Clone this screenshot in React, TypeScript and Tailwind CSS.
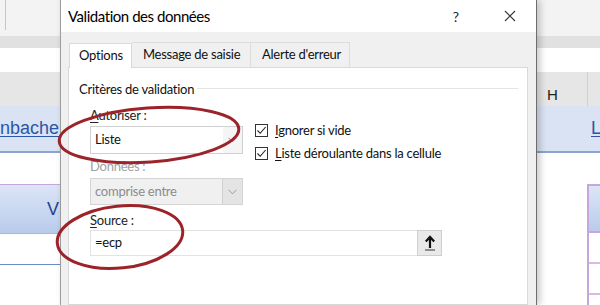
import React from "react";

const ui = "font-['Lato','Liberation_Sans',sans-serif]";

function Chevron({ color = "#606060" }: { color?: string }) {
    return (
        <svg width="9" height="6" viewBox="0 0 9 6">
            <path d="M0.5 0.8 L4.5 4.8 L8.5 0.8" fill="none" stroke={color} strokeWidth="1" />
        </svg>
    );
}

function Check({ hot, rest }: { hot: string; rest: string }) {
    return (
        <div className="flex items-center h-[23px]">
            <div className="w-[13px] h-[13px] border border-[#333] bg-white flex items-center justify-center">
                <svg width="11" height="11" viewBox="0 0 11 11">
                    <path d="M1.5 5.5 L4.2 8.3 L9.6 2" fill="none" stroke="#222" strokeWidth="1.1" />
                </svg>
            </div>
            <span className="ml-[7px] leading-none">
                <span className="underline underline-offset-2">{hot}</span>
                {rest}
            </span>
        </div>
    );
}

function LeftSheet() {
    return (
        <div className="w-[60px] shrink-0 flex flex-col font-['Liberation_Sans',sans-serif]">
            <div className="h-[36px] bg-[#f3f3f3] pl-[5px]">
                <div className="w-px h-[30px] bg-[#c6c6c6]" />
            </div>
            <div className="h-[12px] bg-[#e1e1e1]" />
            <div className="h-[24px] bg-white" />
            <div className="h-[34px] bg-[#e6e6e6]" />
            <div className="h-[47px] bg-[#dae3f3] border-b-2 border-[#8ba3cf] flex items-center justify-end overflow-hidden">
                <span className="text-[18px] text-[#2a56a8] underline underline-offset-2 mr-[1px] whitespace-nowrap">nbache</span>
            </div>
            <div className="h-[31px] bg-white" />
            <div className="h-[50px] border-y border-[#c6a6dc] bg-gradient-to-b from-[#dce5f6] to-[#b9cbeb] flex items-center justify-end">
                <span className="text-[18px] text-[#1e3f91] mr-px">V</span>
            </div>
            <div className="h-[31px] bg-white border-b border-[#6b8cc6]" />
            <div className="flex-1 bg-white" />
        </div>
    );
}

function RightSheet() {
    return (
        <div className="flex-1 flex flex-col font-['Liberation_Sans',sans-serif]">
            <div className="h-[36px] bg-[#f3f3f3]" />
            <div className="h-[12px] bg-[#e1e1e1]" />
            <div className="h-[24px] bg-white" />
            <div className="h-[34px] bg-[#e6e6e6] flex items-center">
                <span className="ml-[10px] w-[40px] text-[15px] text-[#222] pt-[12px]">H</span>
                <div className="w-px h-full bg-[#d0d0d0]" />
            </div>
            <div className="h-[47px] bg-[#dae3f3] border-b-2 border-[#8ba3cf] flex items-center pl-[54px]">
                <span className="text-[18px] text-[#2a56a8] underline underline-offset-2">L</span>
            </div>
            <div className="h-[31px] bg-white" />
            <div className="flex-1 bg-white pl-[50px]">
                <div className="border-l-2 border-t-2 border-[#c6a6dc] h-full flex flex-col">
                    <div className="h-[47px] bg-gradient-to-b from-[#dce5f6] to-[#b9cbeb] border-b-2 border-[#c6a6dc]" />
                    <div className="h-[31px] border-b-2 border-[#d4bce6]" />
                    <div className="h-[31px] border-b-2 border-[#d4bce6]" />
                </div>
            </div>
        </div>
    );
}

function Dialog() {
    return (
        <div className={`w-[477px] shrink-0 relative z-10 bg-[#f0f0f0] border-l border-[#9c9c9c] border-r border-r-[#6e6e6e] shadow-[3px_0_7px_rgba(0,0,0,0.22)] flex flex-col ${ui}`}>
            <div className="h-[32px] bg-white flex items-center pl-[7px] pr-[20px]">
                <span className="text-[15px] tracking-[-0.45px] text-black">Validation des données</span>
                <span className="ml-auto text-[14px] text-[#222] mr-[45px]">?</span>
                <svg width="12" height="12" viewBox="0 0 12 12">
                    <path d="M1 1 L11 11 M11 1 L1 11" stroke="#333" strokeWidth="1.1" />
                </svg>
            </div>
            <div className="flex-1 pt-[10px] pl-[7px] pr-[8px] flex flex-col text-[13px] tracking-[-0.25px] text-[#111]">
                <div className="flex h-[25px]">
                    <div className="ml-px w-[63px] bg-white border border-b-0 border-[#d9d9d9] flex items-center pl-[9px] relative top-px">Options</div>
                    <div className="w-[119px] border-t border-r border-[#dcdcdc] flex items-center pl-[11px]">Message de saisie</div>
                    <div className="w-[99px] border-t border-r border-[#dcdcdc] flex items-center pl-[11px]">Alerte d'erreur</div>
                </div>
                <div className="flex-1 bg-white border border-[#d9d9d9] pl-[10px] pr-[9px] pt-[13px]">
                    <div className="flex items-center h-[16px]">
                        <span className="leading-none">Critères de validation</span>
                        <div className="flex-1 h-px bg-[#e4e4e4] ml-[3px] mb-[2px]" />
                    </div>
                    <div className="pl-[11px] mt-[10px]">
                        <div className="flex">
                            <div className="w-[153px]">
                                <div className="h-[16px] leading-[16px] text-[#222]">
                                    <span className="underline underline-offset-2">A</span>utoriser :
                                </div>
                                <div className="mt-[3px] h-[28px] border border-[#d0d0d0] bg-white flex items-center">
                                    <span className="pl-[4px] flex-1">Liste</span>
                                    <div className="w-[19px] h-full bg-[#f5f5f5] flex items-center justify-center">
                                        <Chevron color="#8a8a8a" />
                                    </div>
                                </div>
                                <div className="mt-[4px] h-[16px] leading-[16px] text-[#a0a0a0]">Données :</div>
                                <div className="mt-[4px] h-[27px] border border-[#d4d4d4] bg-[#f0f0f0] flex items-center">
                                    <span className="pl-[4px] flex-1 text-[#8c8c8c]">comprise entre</span>
                                    <div className="w-[20px] h-full bg-[#e4e4e4] border-l border-[#d0d0d0] flex items-center justify-center">
                                        <Chevron color="#9a9a9a" />
                                    </div>
                                </div>
                            </div>
                            <div className="ml-[12px] pt-[12px]">
                                <Check hot="I" rest="gnorer si vide" />
                                <Check hot="L" rest="iste déroulante dans la cellule" />
                            </div>
                        </div>
                        <div className="mt-[7px] h-[16px] leading-[16px] text-[#222]">
                            <span className="underline underline-offset-2">S</span>ource :
                        </div>
                        <div className="mt-[2px] flex h-[26px] w-[352px]">
                            <div className="flex-1 border border-[#e2e2e2] border-r-0 flex items-center pl-[4px] bg-white">=ecp</div>
                            <div className="w-[25px] bg-[#e9e9e9] border border-[#cfcfcf] flex items-center justify-center">
                                <svg width="12" height="16" viewBox="0 0 12 16">
                                    <path d="M6 13 L6 2.5 M1.8 6.6 L6 2 L10.2 6.6" fill="none" stroke="#111" strokeWidth="2.2" />
                                    <path d="M1 15 L11 15" stroke="#333" strokeWidth="1" />
                                </svg>
                            </div>
                        </div>
                    </div>
                </div>
            </div>
        </div>
    );
}

export default function App() {
    return (
        <div className="w-[600px] h-[305px] overflow-hidden flex relative bg-white">
            <LeftSheet />
            <Dialog />
            <RightSheet />
            <svg className="absolute inset-0 pointer-events-none z-20" width="600" height="305">
                <ellipse cx="149" cy="135" rx="90" ry="27" transform="rotate(-4 149 135)" fill="none" stroke="#9c2329" strokeWidth="3" />
                <ellipse cx="120" cy="237" rx="63" ry="31" transform="rotate(-6 120 237)" fill="none" stroke="#9c2329" strokeWidth="3" />
            </svg>
        </div>
    );
}
